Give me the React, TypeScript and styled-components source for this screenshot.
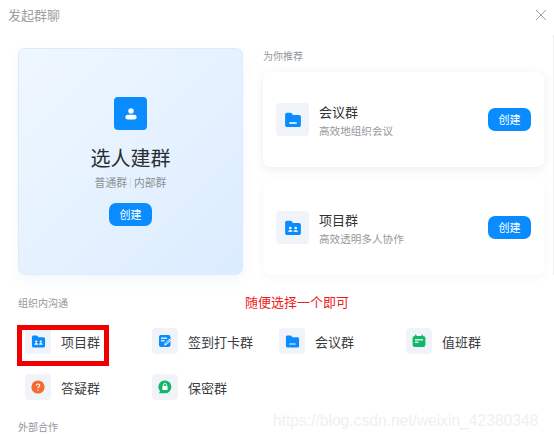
import React from "react";
import styled, { createGlobalStyle } from "styled-components";

const Global = createGlobalStyle`
  html, body { margin: 0; padding: 0; background: #fff; }
  body { font-family: "Noto Sans CJK SC", "Liberation Sans", sans-serif; }
  #root { width: 554px; height: 437px; overflow: hidden; }
`;

const Dialog = styled.div`
  position: relative;
  width: 554px;
  height: 437px;
  overflow: hidden;
  background: #fff;
  box-sizing: border-box;
  padding: 0 10px 0 18px;
`;
const Header = styled.header`
  height: 48px;
  margin-left: -10px;
  padding-top: 5px;
  box-sizing: border-box;
  display: flex;
  justify-content: space-between;
  color: #9b9ea3;
  font-size: 13px;
  line-height: 19px;
`;
const Close = styled.svg`
  width: 12px;
  height: 12px;
  margin: 4px -3px 0 0;
`;
const Top = styled.div`
  display: flex;
  gap: 20px;
`;
const Hero = styled.section`
  width: 225px;
  height: 227px;
  box-sizing: border-box;
  padding-top: 48px;
  border: 1px solid #dcebfc;
  border-radius: 7px;
  background: linear-gradient(135deg, #eff7ff 0%, #dbecff 100%);
  box-shadow: 0 6px 14px rgba(60, 120, 200, 0.06);
  display: flex;
  flex-direction: column;
  align-items: center;
`;
const HeroIcon = styled.div`
  width: 33px;
  height: 33px;
  border-radius: 4px;
  background: #0a8cff;
  display: flex;
  align-items: center;
  justify-content: center;
`;
const HeroTitle = styled.div`
  margin-top: 14px;
  font-size: 20px;
  line-height: 28px;
  color: #2a2c30;
`;
const HeroSub = styled.div`
  margin-top: 2px;
  font-size: 10.8px;
  line-height: 16px;
  color: #8d9094;
  display: flex;
  align-items: center;
  gap: 3px;
`;
const Divider = styled.i`
  width: 1px;
  height: 10px;
  background: #d5dee8;
`;
const Create = styled.button`
  width: 43px;
  height: 23px;
  padding: 0;
  border: 0;
  border-radius: 7px;
  background: #0a8cff;
  color: #fff;
  font: 11px/23px "Noto Sans CJK SC", sans-serif;
  flex: none;
`;
const HeroCreate = styled(Create)`
  margin-top: 13px;
`;
const Side = styled.div`
  width: 281px;
`;
const Label = styled.div`
  font-size: 10px;
  line-height: 16px;
  color: #94979b;
`;
const Cards = styled.div`
  margin-top: 8px;
  display: flex;
  flex-direction: column;
  gap: 13px;
`;
const Card = styled.article<{ $soft?: boolean }>`
  height: 95px;
  box-sizing: border-box;
  padding: 0 13px;
  border-radius: 7px;
  background: #fff;
  box-shadow: 0 2px 10px rgba(40, 60, 90, ${(p) => (p.$soft ? 0.04 : 0.09)});
  display: flex;
  align-items: center;
  gap: 10px;
`;
const Tile = styled.div<{ $size: number }>`
  width: ${(p) => p.$size}px;
  height: ${(p) => p.$size}px;
  flex: none;
  border-radius: 4px;
  background: #f0f3f7;
  display: flex;
  align-items: center;
  justify-content: center;
`;
const CardBody = styled.div`
  flex: 1;
  margin-top: 2px;
`;
const CardTitle = styled.div`
  font-size: 13px;
  line-height: 19px;
  color: #2f3135;
`;
const CardSub = styled.div`
  font-size: 10.6px;
  line-height: 16px;
  margin-top: 2px;
  color: #96999d;
`;
const SectionLabel = styled(Label)`
  margin-top: 20px;
`;
const Grid = styled.div`
  margin: 17px 0 0 7px;
  display: grid;
  grid-template-columns: repeat(4, 127px);
  grid-auto-rows: 26px;
  row-gap: 20px;
`;
const Item = styled.div`
  display: flex;
  align-items: center;
  gap: 10px;
  font-size: 13px;
  color: #3a3c40;
`;
const LastLabel = styled(Label)`
  margin-top: 19px;
`;
const Annotation = styled.div`
  position: absolute;
  left: 245px;
  top: 292px;
  font-size: 13px;
  line-height: 19px;
  color: #f01c1c;
`;
const RedBox = styled.div`
  position: absolute;
  left: 17px;
  top: 325px;
  width: 92px;
  height: 41px;
  box-sizing: border-box;
  border: 5px solid #f00000;
`;
const Watermark = styled.div`
  position: absolute;
  left: 273px;
  top: 412px;
  font: 15.6px/18px "Liberation Sans", Arial, sans-serif;
  color: #f0f0f0;
`;
const Scrollbar = styled.div`
  position: absolute;
  right: 0;
  top: 35px;
  width: 1px;
  height: 240px;
  background: #eceef0;
`;

const Folder = ({ s = 16, mark }: { s?: number; mark: "minus" | "people" }) => (
  <svg width={s} height={s} viewBox="0 0 16 16">
    <path
      d="M1 3.2C1 2.3 1.7 1.6 2.6 1.6h3.2c.5 0 .9.2 1.2.6l1 1.3h5.4c.9 0 1.6.7 1.6 1.6v7.6c0 .9-.7 1.6-1.6 1.6H2.6c-.9 0-1.6-.7-1.6-1.6z"
      fill="#0a8cff"
    />
    {mark === "minus" ? (
      <rect x="4.6" y="10" width="6.8" height="1.3" rx=".4" fill="#fff" />
    ) : (
      <g fill="#fff">
        <circle cx="5.6" cy="8" r="1.2" />
        <path d="M3.6 11.4c0-1 .9-1.7 2-1.7s2 .7 2 1.7z" />
        <circle cx="10.4" cy="8" r="1.2" />
        <path d="M8.4 11.4c0-1 .9-1.7 2-1.7s2 .7 2 1.7z" />
      </g>
    )}
  </svg>
);

const Checkin = () => (
  <svg width="14" height="14" viewBox="0 0 14 14">
    <rect x="1" y="1" width="11.5" height="12" rx="2" fill="#0a8cff" />
    <rect x="3" y="3.6" width="6" height="1.2" fill="#fff" />
    <rect x="3" y="6.2" width="3.6" height="1.2" fill="#fff" />
    <path d="M6.2 11.4l.4-2L11.4 4.8l1.6 1.6-4.8 4.6z" fill="#fff" />
    <path d="M7.2 10.4l.2-.8 4-3.9.5.5-3.9 3.9z" fill="#0a8cff" />
  </svg>
);
const Duty = () => (
  <svg width="14" height="14" viewBox="0 0 14 14">
    <rect x="3" y=".6" width="1.4" height="3" rx=".6" fill="#12b76a" />
    <rect x="9.6" y=".6" width="1.4" height="3" rx=".6" fill="#12b76a" />
    <rect x=".6" y="2" width="12.8" height="11" rx="2.2" fill="#12b76a" />
    <rect x="3" y="5.2" width="8" height="1.2" fill="#fff" />
    <rect x="3" y="7.6" width="3.4" height="1.2" fill="#fff" />
  </svg>
);
const Question = () => (
  <svg width="14" height="14" viewBox="0 0 14 14">
    <circle cx="7" cy="7" r="6.6" fill="#f56a2e" />
    <path d="M5.3 5.6C5.3 4.6 6 4 7 4s1.7.6 1.7 1.5c0 1.3-1.7 1.3-1.7 2.6" fill="none" stroke="#fff" strokeWidth="1.1" />
    <circle cx="7" cy="10" r=".7" fill="#fff" />
  </svg>
);
const Secret = () => (
  <svg width="14" height="14" viewBox="0 0 14 14">
    <path d="M7 .5a6.4 6.4 0 0 1 0 12.8H1l1-2.2A6.4 6.4 0 0 1 7 .5z" fill="#12b76a" />
    <rect x="4.4" y="6" width="5.2" height="4" rx=".6" fill="#fff" />
    <path d="M5.4 6V5a1.6 1.6 0 0 1 3.2 0v1" fill="none" stroke="#fff" strokeWidth=".9" />
  </svg>
);

const items: [React.ReactNode, string][] = [
  [<Folder mark="people" s={15} />, "项目群"],
  [<Checkin />, "签到打卡群"],
  [<Folder mark="minus" s={15} />, "会议群"],
  [<Duty />, "值班群"],
  [<Question />, "答疑群"],
  [<Secret />, "保密群"],
];

export default function App() {
  return (
    <Dialog>
      <Global />
      <Header>
        <span>发起群聊</span>
        <Close viewBox="0 0 12 12">
          <path d="M1 1l10 10M11 1L1 11" stroke="#9a9da1" strokeWidth="1" fill="none" />
        </Close>
      </Header>
      <Top>
        <Hero>
          <HeroIcon>
            <svg width="14" height="14" viewBox="0 0 14 14">
              <circle cx="7" cy="4" r="2.7" fill="#fff" />
              <rect x="1.4" y="7.8" width="11.2" height="4.8" rx="2.4" fill="#fff" />
            </svg>
          </HeroIcon>
          <HeroTitle>选人建群</HeroTitle>
          <HeroSub>
            普通群<Divider />内部群
          </HeroSub>
          <HeroCreate>创建</HeroCreate>
        </Hero>
        <Side>
          <Label>为你推荐</Label>
          <Cards>
            <Card>
              <Tile $size={33}>
                <Folder mark="minus" s={18} />
              </Tile>
              <CardBody>
                <CardTitle>会议群</CardTitle>
                <CardSub>高效地组织会议</CardSub>
              </CardBody>
              <Create>创建</Create>
            </Card>
            <Card $soft>
              <Tile $size={33}>
                <Folder mark="people" s={18} />
              </Tile>
              <CardBody>
                <CardTitle>项目群</CardTitle>
                <CardSub>高效透明多人协作</CardSub>
              </CardBody>
              <Create>创建</Create>
            </Card>
          </Cards>
        </Side>
      </Top>
      <SectionLabel>组织内沟通</SectionLabel>
      <Grid>
        {items.map(([icon, name]) => (
          <Item key={name}>
            <Tile $size={26}>{icon}</Tile>
            {name}
          </Item>
        ))}
      </Grid>
      <LastLabel>外部合作</LastLabel>
      <Annotation>随便选择一个即可</Annotation>
      <RedBox />
      <Watermark>https://blog.csdn.net/weixin_42380348</Watermark>
      <Scrollbar />
    </Dialog>
  );
}
